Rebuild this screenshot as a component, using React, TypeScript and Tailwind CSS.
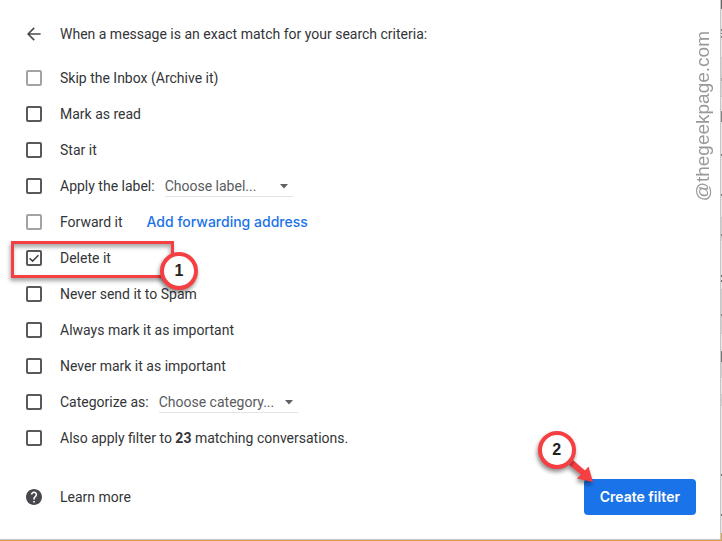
import React, { useState } from 'react';

interface FilterRowProps {
  id: string;
  label: React.ReactNode;
  checked: boolean;
  disabled?: boolean;
  onToggle: (id: string) => void;
  children?: React.ReactNode;
}

const FilterRow: React.FC<FilterRowProps> = ({ id, label, checked, disabled, onToggle, children }) => (
  <div className="relative flex h-9 items-center">
    <span className="relative flex h-4 w-4 shrink-0">
      <input
        id={id}
        type="checkbox"
        checked={checked}
        disabled={disabled}
        onChange={() => onToggle(id)}
        className="h-4 w-4 appearance-none rounded-xs border-2 border-[#58595c] disabled:border-[#a3a3a5]"
      />
      {checked && (
        <svg viewBox="0 0 16 16" className="pointer-events-none absolute inset-0 h-4 w-4" aria-hidden="true">
          <path d="M3.6 8.2 6.6 11.1 12.4 5.2" fill="none" stroke="#3c4043" strokeWidth="1.5" />
        </svg>
      )}
    </span>
    <label htmlFor={id} className="ml-[18px] whitespace-nowrap">
      {label}
    </label>
    {children}
  </div>
);

interface PickerProps {
  label: string;
  placeholder: string;
  options: string[];
  className: string;
}

const Picker: React.FC<PickerProps> = ({ label, placeholder, options, className }) => (
  <span className={`relative ml-2.5 border-b border-[#e4e4e4] ${className}`}>
    <select aria-label={label} className="block h-5 w-full appearance-none bg-transparent text-[#5a5b5e] outline-none">
      <option>{placeholder}</option>
      {options.map((o) => (
        <option key={o}>{o}</option>
      ))}
    </select>
    <svg viewBox="0 0 10 5" className="pointer-events-none absolute top-2 right-1 h-[5px] w-[10px]" aria-hidden="true">
      <path d="M1 0h8L5 4.5z" fill="#5f6063" />
    </svg>
  </span>
);

const StepBadge: React.FC<{ step: number; className: string }> = ({ step, className }) => (
  <span
    className={`absolute flex h-[38px] w-[38px] items-center justify-center rounded-full border-4 border-[#f63f42] bg-white font-['Liberation_Sans',sans-serif] text-base font-bold text-[#222] shadow-[-1px_3px_4px_rgba(0,0,0,0.45)] ${className}`}
  >
    {step}
  </span>
);

// sliver of the mailbox that shows past the dialog's edge: [y, height, colour]
const inboxMarks: [number, number, string][] = [
  [0, 9, '#6a6a6c'],
  [29, 2, '#777777'],
  [33, 1, '#777777'],
  [36, 2, '#777777'],
  [57, 40, '#d3d3d3'],
  [78, 3, '#aaaaaa'],
  [96, 1, '#bdbdbd'],
  [111, 11, '#848486'],
  [154, 2, '#7a7a7a'],
  [194, 2, '#7a7a7a'],
  [217, 24, '#d0d0d0'],
  [234, 2, '#7a7a7a'],
  [275, 2, '#6a6a6a'],
  [280, 2, '#6a6a6a'],
  [289, 45, '#d0d0d0'],
  [314, 2, '#7a7a7a'],
  [351, 11, '#77777a'],
  [362, 16, '#cfcfcf'],
  [394, 12, '#cfcfcf'],
  [474, 2, '#6a6a6a'],
  [514, 2, '#6a6a6a'],
  [533, 8, '#d9a050'],
];

const App: React.FC = () => {
  const [selected, setSelected] = useState<string[]>(['delete']);

  const toggle = (id: string) => {
    setSelected((prev) => (prev.includes(id) ? prev.filter((s) => s !== id) : [...prev, id]));
  };

  const row = (id: string) => ({ id, checked: selected.includes(id), onToggle: toggle });

  return (
    <div className="flex min-h-screen flex-col bg-white font-['Roboto',sans-serif] text-sm text-[#343538]">
      <div className="flex flex-1">
        <main className="relative flex flex-1 flex-col border-r border-b border-[#c6c6c6] pt-4 pr-6 pb-6 pl-[26px]">
          <header className="flex h-9 items-center">
            <button type="button" aria-label="Back" className="flex h-4 w-4 items-center justify-center">
              <svg viewBox="0 0 16 16" className="h-4 w-4" aria-hidden="true">
                <path d="M14.6 8H2.4M8.2 1.9 2.1 8l6.1 6.1" fill="none" stroke="#4a4b4e" strokeWidth="1.6" />
              </svg>
            </button>
            <h1 className="ml-[18px]">When a message is an exact match for your search criteria:</h1>
          </header>

          <form className="mt-2">
            <FilterRow {...row('archive')} disabled label="Skip the Inbox (Archive it)" />
            <FilterRow {...row('read')} label="Mark as read" />
            <FilterRow {...row('star')} label="Star it" />
            <FilterRow {...row('label')} label="Apply the label:">
              <Picker label="Label" placeholder="Choose label..." options={['New label...']} className="w-32" />
            </FilterRow>
            <FilterRow {...row('forward')} disabled label="Forward it">
              <a href="#forwarding" className="ml-6 font-['Inter',sans-serif] font-medium text-[#1a73e8]">
                Add forwarding address
              </a>
            </FilterRow>
            <FilterRow {...row('delete')} label="Delete it">
              <span className="pointer-events-none absolute top-px -left-[15px] h-[37px] w-[163px] border-3 border-[#f63f42] shadow-[-1px_3px_4px_rgba(0,0,0,0.35),inset_-1px_3px_4px_rgba(0,0,0,0.35)]" />
              <StepBadge step={1} className="top-3 left-[134px] z-10" />
            </FilterRow>
            <FilterRow {...row('spam')} label="Never send it to Spam" />
            <FilterRow {...row('important')} label="Always mark it as important" />
            <FilterRow {...row('unimportant')} label="Never mark it as important" />
            <FilterRow {...row('category')} label="Categorize as:">
              <Picker
                label="Category"
                placeholder="Choose category..."
                options={['Primary', 'Social', 'Updates', 'Forums', 'Promotions']}
                className="w-[139px]"
              />
            </FilterRow>
            <FilterRow
              {...row('existing')}
              label={
                <>
                  Also apply filter to <b>23</b> matching conversations.
                </>
              }
            />
          </form>

          <footer className="mt-[23px] flex h-9 items-center justify-between">
            <a href="#help" className="flex items-center">
              <svg viewBox="2 2 20 20" className="h-4 w-4" aria-hidden="true">
                <path
                  fill="#48494c"
                  d="M12 2C6.48 2 2 6.48 2 12s4.48 10 10 10 10-4.48 10-10S17.52 2 12 2zm1 17h-2v-2h2v2zm2.07-7.75l-.9.92C13.45 12.9 13 13.5 13 15h-2v-.5c0-1.1.45-2.1 1.17-2.83l1.24-1.26c.37-.36.59-.86.59-1.41 0-1.1-.9-2-2-2s-2 .9-2 2H8c0-2.21 1.79-4 4-4s4 1.79 4 4c0 .88-.36 1.68-.93 2.25z"
                />
              </svg>
              <span className="ml-[18px]">Learn more</span>
            </a>
            <div className="relative">
              <button type="button" className="h-9 rounded bg-[#1a73e8] px-4 font-['Inter',sans-serif] font-semibold text-white">
                Create filter
              </button>
              <svg
                viewBox="0 0 28 26"
                className="pointer-events-none absolute -top-[22px] -left-[19px] h-[26px] w-7 drop-shadow-[-1px_3px_2px_rgba(0,0,0,0.45)]"
                aria-hidden="true"
              >
                <path d="M4 8 8 3 20 13.500 23.500 9.500 28 25 12 21.500 16 17.500z" fill="#f63f42" />
              </svg>
              <StepBadge step={2} className="-top-12 -left-[46px]" />
            </div>
          </footer>

          <p className="pointer-events-none absolute top-[31px] right-1 rotate-180 font-['Liberation_Sans',sans-serif] text-[19px] text-[#999] [writing-mode:vertical-rl]">
            @thegeekpage.com
          </p>
        </main>
        <svg className="w-px shrink-0 self-stretch bg-[#e6e6e6]" aria-hidden="true">
          {inboxMarks.map(([y, h, fill]) => (
            <rect key={y} y={y} width="1" height={h} fill={fill} />
          ))}
        </svg>
      </div>
      <div className="h-px bg-[#d9a050]" />
    </div>
  );
};

export default App;
